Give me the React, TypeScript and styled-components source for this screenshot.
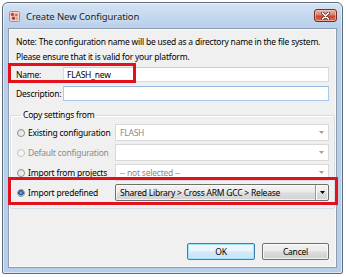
import React from "react";
import styled, { createGlobalStyle, css } from "styled-components";

const Global = createGlobalStyle`
  html, body { margin: 0; padding: 0; background: #ffffff; }
  body { font-family: "Noto Sans", "DejaVu Sans", sans-serif; font-size: 8.5px; letter-spacing: -0.22px; color: #000; }
  * { box-sizing: border-box; }
`;

const Page = styled.div`
  width: 346px;
  height: 277px;
  padding: 2px 3px 3px 2px;
`;

const Window = styled.div`
  position: relative;
  width: 341px;
  height: 272px;
  border: 1px solid #5f6b7a;
  border-radius: 6px 6px 2px 2px;
  background: linear-gradient(180deg, #d6e4f4 0px, #c5d8ef 12px, #b8cfea 26px, #b6cee9 100%);
  display: flex;
  flex-direction: column;
  padding: 0 5px 5px 5px;
  box-shadow: inset 0 0 0 1px rgba(255, 255, 255, 0.55);
`;

const TitleBar = styled.div`
  height: 25px;
  display: flex;
  align-items: center;
  padding: 2px 0 0 1px;
  gap: 6px;
`;

const Title = styled.span`
  flex: 1;
  font-size: 9.5px;
  letter-spacing: -0.1px;
  color: #1e1e1e;
  text-shadow: 0 0 6px rgba(255, 255, 255, 0.9);
`;

const CloseButton = styled.div`
  width: 23px;
  height: 13px;
  margin-top: -2px;
  border: 1px solid #7a2a1e;
  border-radius: 3px;
  background: linear-gradient(180deg, #eab1a6 0%, #d8826f 45%, #c2472f 55%, #d9735a 100%);
  display: flex;
  align-items: center;
  justify-content: center;
  box-shadow: inset 0 0 0 1px rgba(255, 220, 210, 0.5);
`;

const Client = styled.div`
  flex: 1;
  border: 1px solid #8c9db3;
  background: #f0f0f0;
  display: flex;
  flex-direction: column;
  padding: 5px 0 7px 0;
  box-shadow: inset 0 0 0 1px #fafafa;
`;

const Note = styled.div`
  padding: 0 7px;
  line-height: 15px;
  white-space: nowrap;
`;

const FieldRow = styled.div<{ $top: number }>`
  display: grid;
  grid-template-columns: 47px 1fr;
  align-items: center;
  padding: 0 7px;
  margin-top: ${(p) => p.$top}px;
`;

const TextInput = styled.div<{ $focused?: boolean }>`
  height: 15px;
  background: #ffffff;
  border: 1px solid ${(p) => (p.$focused ? "#a9c9ea" : "#d8dbe0")};
  border-top-color: ${(p) => (p.$focused ? "#94b8e0" : "#c9ccd2")};
  display: flex;
  align-items: center;
  padding-left: 3px;
`;

const Group = styled.fieldset`
  margin: 8px 1px 0 1px;
  padding: 3px 5px 7px 6px;
  border: 1px solid #d5dfe5;
  border-radius: 2px;
  box-shadow: inset 1px 1px 0 #ffffff;
  display: flex;
  flex-direction: column;
  gap: 3px;
`;

const Legend = styled.legend`
  padding: 0 2px;
  margin-left: 4px;
  line-height: 12px;
`;

const OptionRow = styled.div`
  display: grid;
  grid-template-columns: 98px 1fr;
  align-items: center;
  height: 17px;
`;

const OptionLabel = styled.label<{ $disabled?: boolean }>`
  display: flex;
  align-items: center;
  gap: 3px;
  color: ${(p) => (p.$disabled ? "#8c8c8c" : "#000")};
  white-space: nowrap;
`;

const Radio = styled.span<{ $checked?: boolean; $disabled?: boolean }>`
  width: 8px;
  height: 8px;
  border-radius: 50%;
  flex: none;
  border: 1px solid ${(p) => (p.$disabled ? "#c6c6c6" : "#8e8f8f")};
  background: ${(p) =>
    p.$checked
      ? "radial-gradient(circle at 50% 45%, #8fc4ef 0, #2c6fb4 1.6px, #1b4f8c 2.6px, #e9e9e9 3px, #fdfdfd 100%)"
      : p.$disabled
      ? "linear-gradient(135deg, #ededed, #fbfbfb)"
      : "linear-gradient(135deg, #d9d9d9, #fbfbfb)"};
`;

const Combo = styled.div<{ $readonly?: boolean }>`
  height: 17px;
  display: flex;
  align-items: center;
  ${(p) =>
    p.$readonly
      ? css`
          border: 1px solid #6f6f6f;
          border-radius: 2px;
          background: linear-gradient(180deg, #f3f3f3 0%, #ebebeb 48%, #dddddd 52%, #d2d2d2 100%);
          box-shadow: inset 0 0 0 1px rgba(255, 255, 255, 0.7);
        `
      : css`
          border: 1px solid #d9d9d9;
          background: #ffffff;
          color: #8a8a8a;
        `}
`;

const ComboText = styled.span`
  flex: 1;
  padding-left: 4px;
  white-space: nowrap;
  overflow: hidden;
`;

const ArrowCell = styled.span<{ $button?: boolean }>`
  width: 13px;
  height: 100%;
  display: flex;
  align-items: center;
  justify-content: center;
  ${(p) =>
    p.$button &&
    css`
      border-left: 1px solid #9a9a9a;
      box-shadow: inset 1px 0 0 #ffffff;
    `}
`;

const Spacer = styled.div`
  flex: 1;
`;

const ButtonBar = styled.div`
  display: flex;
  justify-content: flex-end;
  gap: 7px;
  padding: 0 7px;
`;

const Button = styled.div<{ $default?: boolean; $w: number }>`
  width: ${(p) => p.$w}px;
  height: 17px;
  display: flex;
  align-items: center;
  justify-content: center;
  border-radius: 2px;
  border: 1px solid ${(p) => (p.$default ? "#3c7fb1" : "#707070")};
  background: ${(p) =>
    p.$default
      ? "linear-gradient(180deg, #f2f9fd 0%, #e8f3fb 48%, #d5e9f7 52%, #c9e3f6 100%)"
      : "linear-gradient(180deg, #f2f2f2 0%, #ebebeb 48%, #dddddd 52%, #cfcfcf 100%)"};
  box-shadow: inset 0 0 0 1px ${(p) => (p.$default ? "#9fe4fa" : "rgba(255,255,255,0.75)")};
`;

const Highlight = styled.div<{ $x: number; $y: number; $w: number; $h: number }>`
  position: absolute;
  left: ${(p) => p.$x}px;
  top: ${(p) => p.$y}px;
  width: ${(p) => p.$w}px;
  height: ${(p) => p.$h}px;
  border: 3px solid #e3111b;
  pointer-events: none;
`;

const AppIcon = () => (
  <svg width="11" height="11" viewBox="0 0 11 11">
    <rect x="0.5" y="0.5" width="10" height="10" rx="1" fill="#efd2c8" stroke="#b98a7c" />
    <circle cx="3.5" cy="3.5" r="1.8" fill="#c9454a" />
    <circle cx="7.3" cy="4" r="1.5" fill="#d46a5c" />
    <circle cx="4.5" cy="7.3" r="1.7" fill="#b83a44" />
    <circle cx="7.8" cy="7.6" r="1.2" fill="#e09a80" />
  </svg>
);

const CloseX = () => (
  <svg width="9" height="8" viewBox="0 0 9 8">
    <path d="M1.5 1 L7.5 7 M7.5 1 L1.5 7" stroke="#4a1a12" strokeWidth="2.8" strokeLinecap="round" />
    <path d="M1.5 1 L7.5 7 M7.5 1 L1.5 7" stroke="#ffffff" strokeWidth="1.7" strokeLinecap="round" />
  </svg>
);

const DownArrow = ({ color }: { color: string }) => (
  <svg width="5" height="3" viewBox="0 0 5 3">
    <path d="M0 0 H5 L2.5 3 Z" fill={color} />
  </svg>
);

export default function App() {
  return (
    <>
      <Global />
      <Page>
        <Window>
          <TitleBar>
            <AppIcon />
            <Title>Create New Configuration</Title>
            <CloseButton>
              <CloseX />
            </CloseButton>
          </TitleBar>
          <Client>
            <Note>
              Note: The configuration name will be used as a directory name in the file system.
              <br />
              Please ensure that it is valid for your platform.
            </Note>
            <FieldRow $top={3}>
              <span>Name:</span>
              <TextInput>FLASH_new</TextInput>
            </FieldRow>
            <FieldRow $top={4}>
              <span>Description:</span>
              <TextInput $focused />
            </FieldRow>
            <Group>
              <Legend>Copy settings from</Legend>
              <OptionRow>
                <OptionLabel>
                  <Radio />
                  Existing configuration
                </OptionLabel>
                <Combo>
                  <ComboText>FLASH</ComboText>
                  <ArrowCell>
                    <DownArrow color="#a0a0a0" />
                  </ArrowCell>
                </Combo>
              </OptionRow>
              <OptionRow>
                <OptionLabel $disabled>
                  <Radio $disabled />
                  Default configuration
                </OptionLabel>
                <Combo>
                  <ComboText />
                  <ArrowCell>
                    <DownArrow color="#a0a0a0" />
                  </ArrowCell>
                </Combo>
              </OptionRow>
              <OptionRow>
                <OptionLabel>
                  <Radio />
                  Import from projects
                </OptionLabel>
                <Combo>
                  <ComboText>-- not selected --</ComboText>
                  <ArrowCell>
                    <DownArrow color="#a0a0a0" />
                  </ArrowCell>
                </Combo>
              </OptionRow>
              <OptionRow>
                <OptionLabel>
                  <Radio $checked />
                  Import predefined
                </OptionLabel>
                <Combo $readonly>
                  <ComboText>Shared Library &gt; Cross ARM GCC &gt; Release</ComboText>
                  <ArrowCell $button>
                    <DownArrow color="#000000" />
                  </ArrowCell>
                </Combo>
              </OptionRow>
            </Group>
            <Spacer />
            <ButtonBar>
              <Button $default $w={68}>OK</Button>
              <Button $w={67}>Cancel</Button>
            </ButtonBar>
          </Client>
          <Highlight $x={5} $y={60} $w={128} $h={20} />
          <Highlight $x={5} $y={174} $w={330} $h={28} />
        </Window>
      </Page>
    </>
  );
}
